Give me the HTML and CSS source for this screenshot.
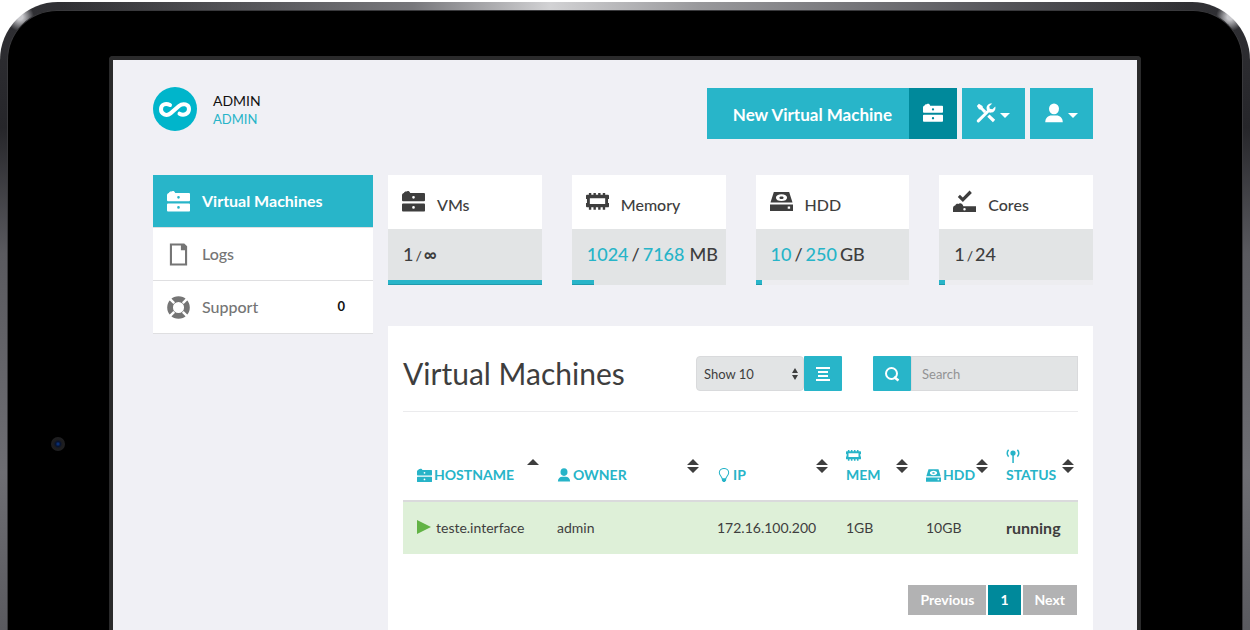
FILE: index.html
```html
<!DOCTYPE html>
<html lang="en">
<head>
<meta charset="utf-8">
<title>Virtual Machines</title>
<link rel="stylesheet" href="styles.css">
</head>
<body>
<svg class="sprite" aria-hidden="true">
  <symbol id="i-server" viewBox="0 0 24 24"><path fill-rule="evenodd" d="M1 11.800c-.6 0-1-.4-1-1V5.500C0 4 .8 3.200 2 3c.5-1.200 1.500-1.800 2.600-1.400C5.600.6 8 .8 8.600 3.200H23c.6 0 1 .4 1 1v6.600c0 .6-.4 1-1 1zM12 6.200a1.400 1.400 0 1 0 0 2.800 1.400 1.400 0 0 0 0-2.800zM1 14h22c.6 0 1 .4 1 1v6.500c0 .6-.4 1-1 1H1c-.6 0-1-.4-1-1V15c0-.6.4-1 1-1zm11 2.800a1.400 1.400 0 1 0 0 2.800 1.400 1.400 0 0 0 0-2.800z"/></symbol>
  <symbol id="i-memory" viewBox="0 0 24 24"><path fill-rule="evenodd" d="M3 5V3h2.500v2h2.300V3h2.500v2h2.400V3h2.500v2h2.300V3H20v2h3c.6 0 1 .4 1 1v3.500h-1v4h1V17c0 .6-.4 1-1 1h-3v2.500h-2.500V18h-2.300v2.500h-2.500V18h-2.400v2.500H7.800V18H5.500v2.500H3V18H1c-.6 0-1-.4-1-1v-3.500h1v-4H0V6c0-.6.4-1 1-1zM4 8.500v6h16v-6z"/></symbol>
  <symbol id="i-hdd" viewBox="0 0 24 24"><path fill-rule="evenodd" d="M4 2h16l3.500 11H.5zm8 2.500c-3.500 0-5.800 1.500-5.800 3.500s2.300 3.500 5.800 3.500 5.800-1.500 5.800-3.500-2.300-3.500-5.800-3.500zm0 2.200c1.300 0 2.200.6 2.200 1.300s-.9 1.300-2.200 1.300-2.200-.6-2.200-1.300.9-1.300 2.200-1.300zM0 15h24v7H0zm18.500 2.200v2.400H21v-2.400z"/></symbol>
  <symbol id="i-cores" viewBox="0 0 24 24"><path fill-rule="evenodd" d="M5 7.300 7.200 5l3 2.800L17.300.5 19.700 3l-9.400 9.500zM0 23v-4c0-1.800 1-2.800 2.300-2.900.6-1.600 2-2.100 3.200-1.600 2-1.300 4.500-.5 5.300 2.500H24v6zm12-4.300a1.300 1.300 0 1 0 0 2.600 1.300 1.300 0 0 0 0-2.600z"/></symbol>
  <symbol id="i-user" viewBox="0 0 24 24"><ellipse cx="12" cy="7" rx="6" ry="6.500"/><path d="M1.500 23c0-5 3.500-8 7.500-8h6c4 0 7.500 3 7.500 8z"/></symbol>
  <symbol id="i-tools" viewBox="0 0 24 24"><path d="M1 3.500 3.500 1l4.300 2.500.5 2.200 4 4-2.500 2.500-4-4-2.300-.6zM13.500 16.500l2.700-2.700 6.800 6.400L20.300 23z"/><path d="m2.800 21.500 11-11" stroke="currentColor" stroke-width="3.600" stroke-linecap="round"/><path d="M19.500.7c-4-1-8 3-6.500 7.300.5 2.500 3 4 5.500 3.500 3.500-.5 5.600-4 4.600-7.300L19.700 7.500l-3.200-.6-.5-3z"/></symbol>
  <symbol id="i-file" viewBox="0 0 24 24"><path fill-rule="evenodd" d="M3 .5h15l3 3V23.500H3zm2.200 2.200v18.600h13.600V7.500H14.500V2.700z"/></symbol>
  <symbol id="i-ring" viewBox="0 0 24 24"><circle cx="12" cy="12" r="8.800" fill="none" stroke="currentColor" stroke-width="6"/><path d="m2.500 2.500 5 5M21.500 2.500l-5 5M2.500 21.500l5-5M21.500 21.500l-5-5" stroke="#fff" stroke-width="2.600"/></symbol>
  <symbol id="i-bulb" viewBox="0 0 24 24"><path d="M9 19c0-4-5-6-5-11a8 7.200 0 0 1 16 0c0 5-5 7-5 11z" fill="none" stroke="currentColor" stroke-width="1.800"/><path d="M8.500 18h7v3.500L13.500 24h-3l-2-2.500z"/></symbol>
  <symbol id="i-signal" viewBox="0 0 24 24"><circle cx="12" cy="7" r="4.500"/><path d="M10.800 9h2.600v15h-2.600z"/><path d="M4.500 1.500c-3.200 3-3.200 8.500 0 11.500M19.500 1.500c3.200 3 3.200 8.500 0 11.500" fill="none" stroke="currentColor" stroke-width="2.600"/></symbol>
  <symbol id="i-both" viewBox="0 0 12 14"><path d="M6 0l6 6H0zM0 8h12l-6 6z"/></symbol>
  <symbol id="i-up" viewBox="0 0 12 14"><path d="M6 0l6 6H0z"/></symbol>
  <symbol id="i-caret" viewBox="0 0 10 5"><path d="M0 0h10L5 5z"/></symbol>
</svg>

<div class="device">
  <div class="bezel">
    <span class="camera"></span>
    <div class="screen">
      <header class="top">
        <div class="account">
          <svg class="logo" viewBox="0 0 44 44" role="img" aria-label="Logo"><circle cx="22" cy="22" r="22" fill="#00b5cb"/><path d="M17 18c-4.500-2.300-9-.5-9 4.200 0 5 5.500 7.500 9.500 4.200l8.500-7.300c4-3.500 10-2 10 3s-5.500 6.800-9.500 4.600" fill="none" stroke="#fff" stroke-width="4" stroke-linecap="round" stroke-linejoin="round"/></svg>
          <div class="who"><span>ADMIN</span><a href="#">ADMIN</a></div>
        </div>
        <div class="actions">
          <button class="new-vm"><span class="new-label">New Virtual Machine</span><span class="new-icon"><svg class="icon i20"><use href="#i-server"/></svg></span></button>
          <button class="drop" aria-label="Tools"><svg class="icon i20"><use href="#i-tools"/></svg><svg class="caret"><use href="#i-caret"/></svg></button>
          <button class="drop" aria-label="User"><svg class="icon i20"><use href="#i-user"/></svg><svg class="caret"><use href="#i-caret"/></svg></button>
        </div>
      </header>

      <div class="columns">
        <nav class="menu">
          <a class="active" href="#"><svg class="icon i23"><use href="#i-server"/></svg>Virtual Machines</a>
          <a href="#"><svg class="icon i23"><use href="#i-file"/></svg>Logs</a>
          <a href="#"><svg class="icon i23"><use href="#i-ring"/></svg>Support<span class="count">0</span></a>
        </nav>

        <main class="main">
          <section class="stats">
            <div class="stat">
              <h2><svg class="icon i23"><use href="#i-server"/></svg><span>VMs</span></h2>
              <p>1<small>/</small><span class="inf">∞</span></p>
              <div class="track"><div class="fill" style="width:100%"></div></div>
            </div>
            <div class="stat">
              <h2><svg class="icon i23"><use href="#i-memory"/></svg><span>Memory</span></h2>
              <p><b>1024</b><i>/</i><b>7168</b><span class="mb">MB</span></p>
              <div class="track"><div class="fill" style="width:14.3%"></div></div>
            </div>
            <div class="stat">
              <h2><svg class="icon i23"><use href="#i-hdd"/></svg><span>HDD</span></h2>
              <p><b>10</b><i>/</i><b>250</b><span class="gb">GB</span></p>
              <div class="track light"><div class="fill" style="width:4%"></div></div>
            </div>
            <div class="stat">
              <h2><svg class="icon i23"><use href="#i-cores"/></svg><span>Cores</span></h2>
              <p>1<small>/</small>24</p>
              <div class="track light"><div class="fill" style="width:4%"></div></div>
            </div>
          </section>

          <section class="panel">
            <div class="panel-head">
              <h1>Virtual Machines</h1>
              <form class="tools">
                <div class="length">
                  <select aria-label="Rows to show"><option>Show 10</option></select>
                  <svg class="updown" viewBox="0 0 6 12"><path d="M3 0l3 5H0zM0 7h6l-3 5z"/></svg>
                </div>
                <button type="button" class="square" aria-label="Columns"><svg class="i16" viewBox="0 0 16 16"><path d="M1 1h14v2H1zM3 5h10v2H3zM3 9h10v2H3zM1 13h14v2H1z"/></svg></button>
                <button type="button" class="square find" aria-label="Find"><svg class="i16" viewBox="0 0 16 16"><circle cx="7.500" cy="7.500" r="5.500" fill="none" stroke="currentColor" stroke-width="2"/><path d="M10 11l4.500 3.500" stroke="currentColor" stroke-width="2.500"/></svg></button>
                <input type="search" placeholder="Search" aria-label="Search">
              </form>
            </div>

            <table class="vms">
              <colgroup><col class="c-host"><col class="c-owner"><col class="c-ip"><col class="c-mem"><col class="c-hdd"><col></colgroup>
              <thead>
                <tr>
                  <th><button><span class="lab"><svg class="icon i15"><use href="#i-server"/></svg>HOSTNAME</span><svg class="sort"><use href="#i-up"/></svg></button></th>
                  <th><button><span class="lab"><svg class="icon i14"><use href="#i-user"/></svg>OWNER</span><svg class="sort"><use href="#i-both"/></svg></button></th>
                  <th><button><span class="lab"><svg class="icon i14"><use href="#i-bulb"/></svg>IP</span><svg class="sort"><use href="#i-both"/></svg></button></th>
                  <th><button><span class="lab stack"><svg class="icon i15"><use href="#i-memory"/></svg>MEM</span><svg class="sort"><use href="#i-both"/></svg></button></th>
                  <th><button><span class="lab"><svg class="icon i15"><use href="#i-hdd"/></svg>HDD</span><svg class="sort"><use href="#i-both"/></svg></button></th>
                  <th><button><span class="lab stack"><svg class="icon i14"><use href="#i-signal"/></svg>STATUS</span><svg class="sort"><use href="#i-both"/></svg></button></th>
                </tr>
              </thead>
              <tbody>
                <tr>
                  <td><svg class="play" viewBox="0 0 14 14"><path d="M0 0l14 7-14 7z"/></svg>teste.interface</td>
                  <td>admin</td>
                  <td>172.16.100.200</td>
                  <td>1GB</td>
                  <td>10GB</td>
                  <td class="state">running</td>
                </tr>
              </tbody>
            </table>

            <nav class="pages">
              <button>Previous</button><button class="current">1</button><button>Next</button>
            </nav>
          </section>
        </main>
      </div>
    </div>
  </div>
</div>
</body>
</html>
```
FILE: styles.css
```css
* { box-sizing: border-box; }

body {
  margin: 0;
  padding-top: 2px;
  background: #fff;
  color: #3e3e3e;
  font-family: Lato, "Open Sans", sans-serif;
  font-size: 14px;
  line-height: 20px;
}

h1, h2, p { margin: 0; font-weight: 400; }
a { color: inherit; text-decoration: none; }
button, select, input { font: inherit; color: inherit; border: 0; border-radius: 0; margin: 0; }
button { padding: 0; background: none; cursor: pointer; }
svg { display: block; flex: none; fill: currentColor; }
.sprite { position: absolute; width: 0; height: 0; }

.i14 { width: 14px; height: 14px; }
.i15 { width: 15px; height: 15px; }
.i16 { width: 16px; height: 16px; }
.i20 { width: 20px; height: 20px; }
.i23 { width: 23px; height: 23px; }

/* Tablet body: metal rim, black glass, screen frame */
.device {
  min-height: calc(100vh - 2px);
  display: flex;
  padding: 8px 7px 0;
  border-radius: 58px 58px 0 0;
  background:
    radial-gradient(circle 14px at 20px 15px, #c8c8cc 20%, transparent) left top / 60px 60px no-repeat,
    radial-gradient(circle 14px at 40px 15px, #c8c8cc 20%, transparent) right top / 60px 60px no-repeat,
    linear-gradient(90deg, transparent 5%, #77777b 33%, #d2d2d4 44%, #98989b 56%, #55555a 80%, transparent 95%) top / 100% 8px no-repeat,
    linear-gradient(#303034 0, #26262a 20%, #5a5a5f 40%, #6e6e73 75%, #5a5a5f 100%);
}
.bezel {
  flex: 1;
  display: flex;
  position: relative;
  padding: 45px 101px 0;
  border: 1px solid #39393c;
  border-bottom: 0;
  border-radius: 50px 50px 0 0;
  background: #000;
}
.camera {
  position: absolute;
  left: 43px;
  top: 426px;
  width: 14px;
  height: 14px;
  border-radius: 50%;
  background: radial-gradient(circle, #0a3a90 0, #06122e 25%, #1c1c1e 42%, #232325 100%);
}
.screen {
  flex: 1;
  min-width: 0;
  padding: 27px 44px 0 40px;
  border: 4px solid #2a2a2b;
  border-bottom: 0;
  border-radius: 4px 4px 0 0;
  background: #f0f0f5;
}

/* Header */
.top { display: flex; justify-content: space-between; align-items: flex-start; margin-bottom: 36px; }
.account { display: flex; gap: 16px; align-items: center; }
.logo { width: 44px; height: 44px; }
.who { display: flex; flex-direction: column; padding-top: 2px; line-height: 18px; color: #111; }
.who a { font-size: 13px; color: #27b4c8; }
.actions { display: flex; gap: 5px; padding-top: 1px; color: #fff; }
.actions button { height: 51px; }
.new-vm { display: flex; }
.new-label { padding: 0 17px 0 26px; line-height: 53px; background: #28b5c9; font-size: 17px; font-weight: 700; }
.new-icon { display: flex; align-items: center; justify-content: center; width: 48px; padding-bottom: 2px; background: #00899b; }
.new-label, .new-icon { height: 51px; }
.drop { display: flex; align-items: center; justify-content: center; gap: 4px; width: 63px; padding: 0 2px 2px 0; background: #28b5c9; }
.caret { width: 10px; height: 5px; margin-top: 6px; }

/* Columns */
.columns { display: grid; grid-template-columns: 220px minmax(0, 1fr); gap: 15px; align-items: start; }
.menu a {
  display: flex;
  align-items: center;
  gap: 12px;
  height: 53px;
  padding: 0 28px 0 14px;
  border-bottom: 1px solid #dfdfe1;
  background: #fff;
  color: #757575;
  font-size: 16px;
  font-weight: 500;
}
.menu .active { background: #28b5c9; color: #fff; font-weight: 700; }
.count { margin-left: auto; padding-bottom: 3px; color: #111; font-size: 13px; font-weight: 700; }

/* Statistic cards */
.stats { display: grid; grid-template-columns: repeat(4, minmax(0, 1fr)); gap: 30px; margin-bottom: 41px; }
.stat h2 { display: flex; gap: 12px; height: 54px; padding: 15px 14px 0; background: #fff; font-size: 16px; font-weight: 500; }
.stat h2 span { padding-top: 5px; }
.stat p { display: flex; align-items: baseline; height: 51px; padding: 15px 7px 0 15px; background: #e2e4e5; font-size: 18px; font-weight: 500; white-space: nowrap; }
.stat b { color: #27b4c8; font-weight: 500; }
.stat i { font-style: normal; margin: 0 3px; }
.stat small { font-size: 14px; margin: 0 2px; }
.stat .inf { font-weight: 700; }
.mb { margin-left: 5px; }
.gb { margin-left: 3px; }
.track { height: 5px; background: #e2e4e5; }
.track.light { background: #ededf0; }
.fill { height: 5px; background: #28b5c9; border-bottom: 1px solid #1f9aac; }

/* Machine list */
.panel { padding: 30px 15px 15px; background: #fff; }
.panel-head { display: flex; justify-content: space-between; align-items: flex-start; padding-bottom: 20px; border-bottom: 1px solid #ebebed; }
.panel h1 { font-size: 30px; line-height: 34px; }
.tools { display: flex; font-size: 13px; }
.tools select, .tools input { height: 35px; background: #e2e4e5; border: 1px solid #d9dadc; }
.length { position: relative; }
.length select { width: 108px; padding: 0 7px; border-radius: 4px; appearance: none; }
.updown { position: absolute; right: 6px; top: 12px; width: 6px; height: 12px; pointer-events: none; }
.square { display: flex; align-items: center; justify-content: center; width: 38px; height: 35px; border-radius: 1px; background: #28b5c9; color: #fff; }
.find { margin-left: 31px; }
.tools input { width: 167px; padding: 0 10px; }
.tools input::placeholder { color: #929394; opacity: 1; }

.vms { width: 100%; margin-top: 36px; border-collapse: collapse; table-layout: fixed; }
.c-host { width: 140px; }
.c-owner { width: 160px; }
.c-ip { width: 129px; }
.c-mem, .c-hdd { width: 80px; }
.vms th { padding: 0 4px 15px 14px; border-bottom: 2px solid #dadadc; vertical-align: bottom; }
.vms th button { display: flex; justify-content: space-between; align-items: flex-end; width: 100%; }
.lab { display: flex; align-items: center; gap: 2px; color: #27b4c8; font-weight: 700; }
.lab.stack { flex-direction: column; align-items: flex-start; }
.sort { width: 12px; height: 14px; margin-bottom: 12px; }
.vms td { height: 53px; padding: 0 0 0 14px; background: #def0d8; white-space: nowrap; }
.vms .state { font-size: 16px; font-weight: 700; }
.play { display: inline-block; width: 14px; height: 14px; margin-right: 5px; vertical-align: -1px; color: #62b345; }

.pages { display: flex; justify-content: flex-end; gap: 2px; margin-top: 31px; padding-right: 1px; }
.pages button { height: 30px; padding: 0 12px; background: #b2b2b3; color: #fff; font-weight: 700; }
.pages .current { background: #00899b; }
```
